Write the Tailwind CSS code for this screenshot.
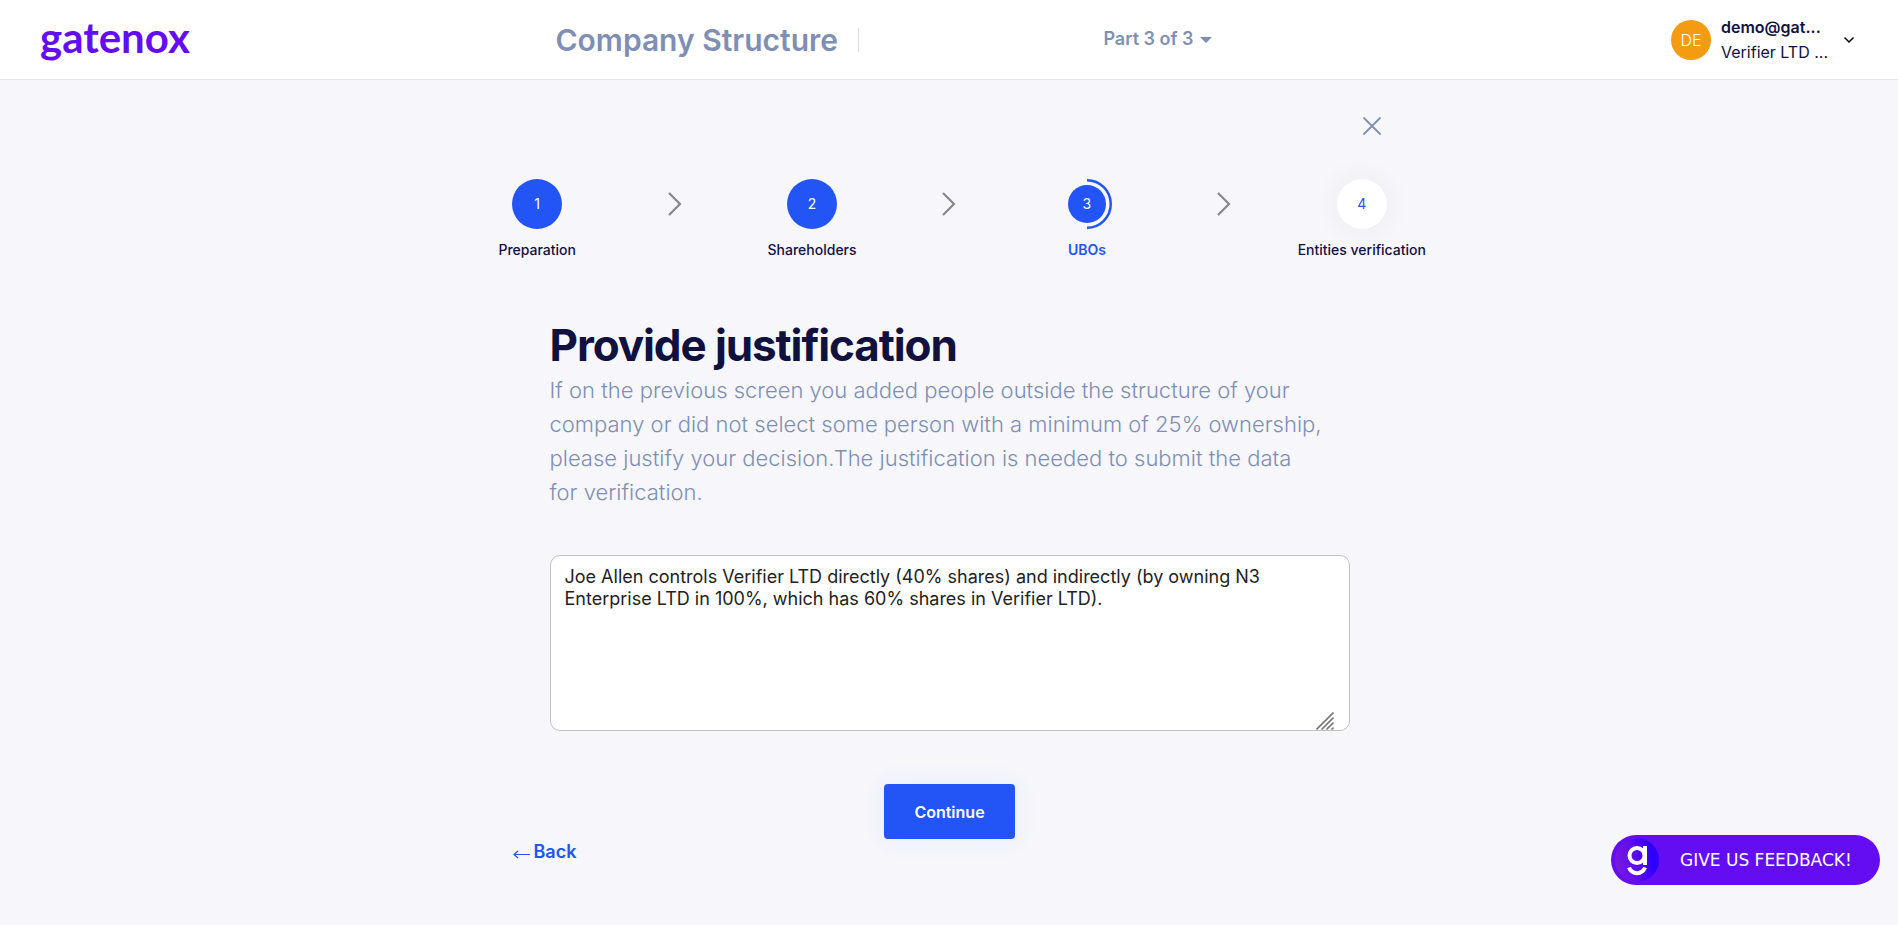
<!DOCTYPE html>
<html lang="en">
<head>
<meta charset="utf-8">
<meta name="viewport" content="width=device-width, initial-scale=1">
<title>Company Structure – gatenox</title>
<script src="https://cdn.jsdelivr.net/npm/@tailwindcss/browser@4"></script>
</head>
<body class="flex min-h-screen flex-col bg-[#f6f6fb] font-[Inter,sans-serif] text-[#11113f]">

<header class="flex h-20 shrink-0 items-center border-b border-[#e4e4e8] bg-white">
  <div class="flex flex-1 pl-10">
    <a href="#" class="pb-1.5 font-[Lato,sans-serif] text-[42px] leading-12 font-bold text-[#650df2]">gatenox</a>
  </div>
  <div class="flex w-[800px] items-center pl-2">
    <h2 class="text-[30px] leading-10 font-semibold text-[#7f8fb3]">Company Structure</h2>
    <span class="ml-5 h-6 w-px bg-[#dcdfea]"></span>
    <button type="button" class="mr-[136px] mb-0.5 ml-auto flex items-center gap-1.5 text-lg leading-6 font-semibold text-[#7f8fb3]">Part 3 of 3
      <svg class="mt-0.5 h-1.5 w-3" viewBox="0 0 12 6" fill="currentColor" aria-hidden="true"><path d="M0 0h12L6 6z"/></svg>
    </button>
  </div>
  <div class="flex flex-1 justify-end pr-[43px]">
    <button type="button" class="flex items-center text-left">
      <span class="flex size-10 items-center justify-center rounded-full bg-[#f39c12] text-base font-light text-white">DE</span>
      <span class="ml-2.5 block w-[110px] text-base leading-[25px]">
        <span class="block font-semibold">demo@gat...</span>
        <span class="block">Verifier LTD ...</span>
      </span>
      <svg class="ml-3 size-3" viewBox="0 0 12 12" fill="none" stroke="#000" stroke-width="1.500" aria-hidden="true"><path d="M1.500 3.500l4.500 4.500 4.500-4.500"/></svg>
    </button>
  </div>
</header>

<main class="flex flex-col items-center pl-px">
  <div class="flex w-[800px] justify-end pt-8">
    <button type="button" aria-label="Close" class="mr-[-36px] flex size-7 items-center justify-center text-[#7f8fb3]">
      <svg class="size-5" viewBox="0 0 20 20" fill="none" stroke="currentColor" stroke-width="1.800" stroke-linecap="round" aria-hidden="true"><path d="M2 2l16 16M18 2L2 18"/></svg>
    </button>
  </div>

  <ol class="mt-[39px] grid w-[962px] grid-cols-7 text-sm leading-5 font-medium">
    <li class="flex flex-col items-center gap-[11px] whitespace-nowrap">
      <span class="flex size-[50px] items-center justify-center rounded-full bg-[#2355f6] font-normal text-white">1</span>Preparation
    </li>
    <li class="flex h-[50px] items-center justify-center" aria-hidden="true">
      <svg class="h-6 w-4" viewBox="0 0 16 24" fill="none" stroke="#888" stroke-width="2.200"><path d="M2 1l11 11L2 23"/></svg>
    </li>
    <li class="flex flex-col items-center gap-[11px] whitespace-nowrap">
      <span class="flex size-[50px] items-center justify-center rounded-full bg-[#2355f6] font-normal text-white">2</span>Shareholders
    </li>
    <li class="flex h-[50px] items-center justify-center" aria-hidden="true">
      <svg class="h-6 w-4" viewBox="0 0 16 24" fill="none" stroke="#888" stroke-width="2.200"><path d="M2 1l11 11L2 23"/></svg>
    </li>
    <li class="flex flex-col items-center gap-[11px] font-semibold whitespace-nowrap text-[#2355f6]" aria-current="step">
      <span class="relative flex size-[50px] items-center justify-center font-normal text-white">
        <svg class="absolute inset-0" viewBox="0 0 50 50" aria-hidden="true"><circle cx="25" cy="25" r="19" fill="#2355f6"/><path d="M25 1.250a23.750 23.750 0 0 1 0 47.500" fill="none" stroke="#2355f6" stroke-width="2.500"/></svg>
        <span class="relative">3</span>
      </span>UBOs
    </li>
    <li class="flex h-[50px] items-center justify-center" aria-hidden="true">
      <svg class="h-6 w-4" viewBox="0 0 16 24" fill="none" stroke="#888" stroke-width="2.200"><path d="M2 1l11 11L2 23"/></svg>
    </li>
    <li class="flex flex-col items-center gap-[11px] whitespace-nowrap">
      <span class="flex size-[50px] items-center justify-center rounded-full bg-white font-normal text-[#2355f6] shadow-[0_0_30px_rgba(0,0,0,0.06)]">4</span>Entities verification
    </li>
  </ol>

  <form class="flex w-[800px] flex-col">
    <h1 class="mt-[59px] text-[44px] leading-[52px] font-bold tracking-tight">Provide justification</h1>
    <p id="hint" class="mt-0.5 text-[22px] leading-[34px] font-light text-[#7f8fb3]">If on the previous screen you added people outside the structure of your<br>company or did not select some person with a minimum of 25% ownership,<br>please justify your decision.The justification is needed to submit the data<br>for verification.</p>
    <div class="relative mt-[46px] flex">
      <textarea aria-label="Justification" aria-describedby="hint" class="h-[176px] w-full resize-none rounded-[10px] border border-[#bfbfc4] bg-white px-[14px] py-[10px] text-lg leading-[22px] text-[#222]">Joe Allen controls Verifier LTD directly (40% shares) and indirectly (by owning N3 Enterprise LTD in 100%, which has 60% shares in Verifier LTD).</textarea>
      <svg class="pointer-events-none absolute right-4 bottom-px h-[18px] w-[18px]" viewBox="0 0 18 18" fill="none" stroke="#777" stroke-width="1.600" aria-hidden="true"><path d="M0.500 17.500L17.500 0.500M5.500 17.500l12-12M10.500 17.500l7-7M15.500 17.500l2-2"/></svg>
    </div>
    <button type="button" class="mt-[53px] h-[55px] w-[131px] self-center rounded bg-[#2355f6] text-base font-semibold text-white shadow-[0_0_24px_rgba(35,150,246,0.08)]">Continue</button>
  </form>

  <div class="w-[874px]">
    <a href="#" class="inline-flex items-center gap-1 text-lg leading-[26px] font-semibold text-[#2355f6]">
      <svg class="mt-1 h-[9px] w-[17px]" viewBox="0 0 17 9" fill="none" stroke="currentColor" stroke-width="1.200" aria-hidden="true"><path d="M1 4.500h16M5 1L1 4.500L5 8"/></svg>Back</a>
  </div>
</main>

<button type="button" class="fixed right-[18px] bottom-10 flex h-[50px] w-[269px] items-center rounded-full bg-[#650df2] pl-1 font-[Verdana,'DejaVu_Sans',sans-serif] text-[17px] text-white">
  <svg class="size-11" viewBox="0 0 44 44" aria-hidden="true">
    <defs><linearGradient id="mark" x1="0" y1="0.600" x2="1" y2="0.400"><stop offset="0" stop-color="#7a18e0"/><stop offset="0.500" stop-color="#5a0cf0"/><stop offset="0.850" stop-color="#2c00fa"/></linearGradient></defs>
    <circle cx="22" cy="22" r="22" fill="url(#mark)"/>
    <circle cx="22" cy="17.500" r="7.500" fill="none" stroke="#fff" stroke-width="4"/>
    <path d="M30 8v19" stroke="#fff" stroke-width="4"/>
    <path d="M14 29.500c3 7.500 13 7.500 16 0" fill="none" stroke="#fff" stroke-width="4"/>
  </svg>
  <span class="mt-0.5 ml-[21px] whitespace-nowrap">GIVE US FEEDBACK!</span>
</button>
</body>
</html>
